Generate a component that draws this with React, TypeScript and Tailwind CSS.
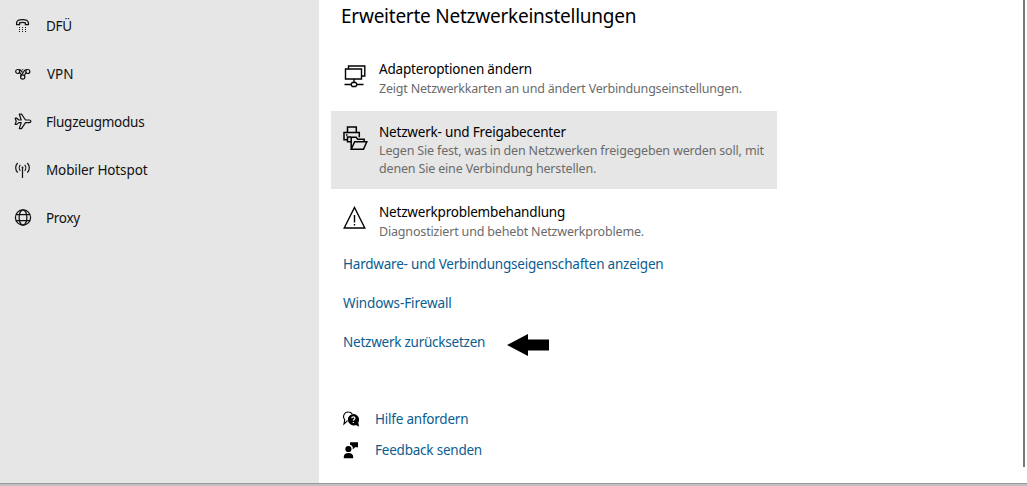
import type { ReactNode } from 'react';

const DialUpIcon = () => (
  <svg width="16" height="16" viewBox="0 0 16 16" fill="none" stroke="#111" strokeWidth="1.3">
    <path d="M1.6 6.7V4.6c.4-1.8 3-2.9 5.9-2.9s5.500 1.100 5.900 2.900v2.100h-3V4.900c-1.700-.7-4.100-.7-5.800 0v1.800h-3Z" />
    <g fill="#111" stroke="none">
      <path d="M4 9h1v1H4zM7 9h1v1H7zM10 9h1v1h-1zM4 11h1v1H4zM7 11h1v1H7zM10 11h1v1h-1zM4 13h1v1H4zM7 13h1v1H7zM10 13h1v1h-1z" />
    </g>
  </svg>
);

const VpnIcon = () => (
  <svg width="16" height="16" viewBox="0 0 16 16" fill="none" stroke="#111" strokeWidth="1.2">
    <circle cx="2.7" cy="5.5" r="2" />
    <circle cx="12.8" cy="5.5" r="2" />
    <circle cx="7.7" cy="11" r="2.1" />
    <path d="M3.600 3.700c2.400-.3 2.800 1.500 3.700 2.700M11.900 3.700c-3.200-.3-3.200 2.600-4.600 4.100-.8.9-1.900 1.200-1.700 2.900M4.500 6.600c.7.500 1 1 1.300 1.700M11 6.600c-1.100.9-.9 1.900-1.500 3" />
    <path d="M7.200 3.600h1" />
  </svg>
);

const PlaneIcon = () => (
  <svg width="18" height="18" viewBox="0 0 18 18" fill="none" stroke="#111" strokeWidth="1.2" strokeLinejoin="round">
    <path d="M1.200 5.200h1.600l2 1.800h2.400L5.300 1.200h2.200l4 5.800h3.700c1 0 1.700.5 1.700 1.300s-.7 1.300-1.700 1.300h-3.700l-4 6H5.300l1.900-6H4.800l-2 1.800H1.200l1-3.100-1-3.100Z" />
  </svg>
);

const HotspotIcon = () => (
  <svg width="16" height="16" viewBox="0 0 16 16" fill="none" stroke="#111" strokeWidth="1.2">
    <path d="M7.500 5.500V16M5.300 2.800c-1.400 1.600-1.400 4.400 0 6M9.700 2.800c1.400 1.600 1.400 4.400 0 6M2.700 1c-2.700 2.600-2.700 7 0 9.600M12.300 1c2.700 2.600 2.700 7 0 9.600" />
    <circle cx="7.500" cy="5.500" r=".9" fill="#111" stroke="none" />
  </svg>
);

const GlobeIcon = () => (
  <svg width="18" height="18" viewBox="0 0 18 18" fill="none" stroke="#111" strokeWidth="1.250">
    <circle cx="9" cy="8.500" r="7.600" />
    <ellipse cx="9" cy="8.500" rx="3.900" ry="7.600" />
    <path d="M2 5.500h14M2 11.500h14" />
  </svg>
);

const AdapterIcon = () => (
  <svg width="24" height="25" viewBox="0 0 24 25" fill="none" stroke="#000" strokeWidth="1.4">
    <path d="M2.500 6h16v10h-16zM5.500 6V3h16.300v10h-3.300M11 16v3.500M1.500 21.500H8M14 21.500h6.500" />
    <path d="M9.200 19.500h3.600l1.200 2-1.200 2H9.200l-1.200-2z" />
  </svg>
);

const SharingIcon = () => (
  <svg width="26" height="26" viewBox="0 0 26 26" fill="none" stroke="#000" strokeWidth="1.5">
    <path d="M4.500 6.500V1h8.800v5.500M4.500 13.800H1V6.600h15.300v4.600M3 9h1.500M4.500 16.500V11h3.500M4.500 15.800h3.700" />
    <path d="M8.200 23.200V11.300h5l1.500 2h6.500v2.500M8.200 23.200l3.500-7.400h12.100l-3.300 7.400H8.200Z" />
  </svg>
);

const WarningIcon = () => (
  <svg width="24" height="24" viewBox="0 0 24 24" fill="none" stroke="#000" strokeWidth="1.4">
    <path d="M11.500 1.500 21.800 22H1.200L11.500 1.500ZM11.500 9v7.500M11.500 18v1.600" />
  </svg>
);

const HelpIcon = () => (
  <svg width="17" height="17" viewBox="0 0 17 17">
    <path d="M4.600 9.600 1 13l.7-4.400A4.600 4.600 0 0 1 5.300 1c1.900 0 3.300.9 4.100 2.200" fill="none" stroke="#000" strokeWidth="1.1" />
    <path d="M10.300 3a5.700 5.700 0 0 1 5 8.500l.8 4.300-3.200-1.900A5.700 5.700 0 1 1 10.300 3Z" />
    <path d="M8.700 7.300c.1-2 3.400-1.900 3.200.1-.1 1.200-1.600 1.100-1.600 2.400M10.300 10.900v1.200" fill="none" stroke="#fff" strokeWidth="1.2" />
  </svg>
);

const FeedbackIcon = () => (
  <svg width="16" height="17" viewBox="0 0 16 17">
    <circle cx="5.4" cy="7" r="3.1" />
    <path d="M.8 16.300v-1.500c0-2.400 1.700-3.800 4.700-3.800s4.700 1.400 4.700 3.800v1.500H.8ZM7 .3h8v5h-3L9.800 7.500V5.300L8.600 3.600 7 2.800V.3Z" />
  </svg>
);

const menu: { name: string; icon: ReactNode; className: string }[] = [
  { name: 'DFÜ', icon: <DialUpIcon />, className: 'tracking-[-0.3px]' },
  { name: 'VPN', icon: <VpnIcon />, className: 'pl-px' },
  { name: 'Flugzeugmodus', icon: <PlaneIcon />, className: 'tracking-[-0.25px]' },
  { name: 'Mobiler Hotspot', icon: <HotspotIcon />, className: 'tracking-[-0.12px]' },
  { name: 'Proxy', icon: <GlobeIcon />, className: 'tracking-[-0.3px]' },
];

const links = [
  { name: 'Hardware- und Verbindungseigenschaften anzeigen', className: 'tracking-[-0.21px]' },
  { name: 'Windows-Firewall', className: 'tracking-[-0.1px]' },
  { name: 'Netzwerk zurücksetzen', className: 'tracking-[-0.24px]' },
];

function Option({ icon, title, className = '', children }: { icon: ReactNode; title: string; className?: string; children: ReactNode }) {
  return (
    <div className={`flex w-[446px] pl-3 ${className}`}>
      <div className="w-9 shrink-0 pt-1">{icon}</div>
      <div className="whitespace-nowrap">
        <div className="text-[13.5px] leading-5 tracking-[-0.19px] text-black">{title}</div>
        <div className="text-[12.5px] leading-[18px] tracking-[-0.17px] text-[#6b6b6b]">{children}</div>
      </div>
    </div>
  );
}

export default function App() {
  return (
    <div className="flex h-[486px] w-[1027px] flex-col overflow-hidden bg-white font-['Noto_Sans','Open_Sans',sans-serif] text-[13.5px] text-[#111]">
      <div className="flex h-[483px] shrink-0">
        <nav className="w-[319px] shrink-0 bg-[#e6e6e6] pt-0.5">
          {menu.map((item) => (
            <a key={item.name} className="flex h-12 items-center pl-3.5">
              <span className="flex w-[18px] justify-center">{item.icon}</span>
              <span className={`ml-3.5 ${item.className}`}>{item.name}</span>
            </a>
          ))}
        </nav>

        <main className="flex-1 pl-3">
          <h1 className="h-12 pt-0.5 pl-2.5 text-[19px] leading-7 tracking-[-0.24px] text-black">Erweiterte Netzwerkeinstellungen</h1>
          <Option icon={<AdapterIcon />} title="Adapteroptionen ändern" className="h-[63px] pt-[11px]">
            <div className="pt-px tracking-[-0.2px]">Zeigt Netzwerkkarten an und ändert Verbindungseinstellungen.</div>
          </Option>
          <Option icon={<SharingIcon />} title="Netzwerk- und Freigabecenter" className="h-[78px] bg-[#e6e6e6] pt-[11px]">
            Legen Sie fest, was in den Netzwerken freigegeben werden soll, mit
            <br />
            denen Sie eine Verbindung herstellen.
          </Option>
          <Option icon={<WarningIcon />} title="Netzwerkproblembehandlung" className="h-14 pt-[13px]">
            <div className="pt-px">Diagnostiziert und behebt Netzwerkprobleme.</div>
          </Option>

          <div className="pl-3 text-[#0b5c8f]">
            {links.map((link, i) => (
              <div key={link.name} className="flex h-[39px] items-center">
                <a className={link.className}>{link.name}</a>
                {i === 2 && (
                  <svg className="mt-1 ml-[22px]" width="42" height="22" viewBox="0 0 42 22">
                    <path d="M0 11 21 0v5.500h21v11H21V22Z" />
                  </svg>
                )}
              </div>
            ))}
            <div className="mt-[42px] flex h-[31px] items-center text-black">
              <HelpIcon />
              <a className="ml-[15px] tracking-[-0.22px] text-[#0b5c8f]">Hilfe anfordern</a>
            </div>
            <div className="flex h-[31px] items-center text-black">
              <FeedbackIcon />
              <a className="ml-4 tracking-[-0.22px] text-[#0b5c8f]">Feedback senden</a>
            </div>
          </div>
        </main>

        <div className="mr-0.5 h-[467px] w-0.5 bg-[#787878]" />
      </div>
      <div className="h-[3px] shrink-0 border-t border-[#999] bg-[#c0c0c0]" />
    </div>
  );
}
